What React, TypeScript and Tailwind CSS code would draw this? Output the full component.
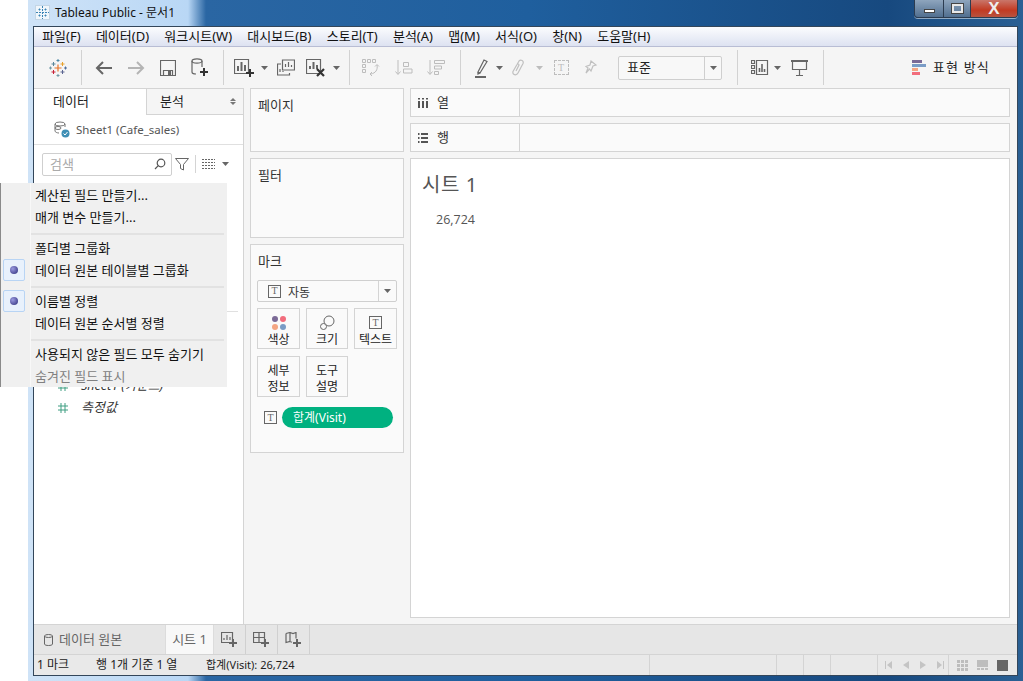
import type { ReactNode } from 'react';

const ic = { fill: 'none', stroke: '#666', strokeWidth: 1.2 };

function Icon({ w = 20, h = 20, children, className }: { w?: number; h?: number; children: ReactNode; className?: string }) {
  return (
    <svg width={w} height={h} viewBox={`0 0 ${w} ${h}`} className={className} {...ic}>
      {children}
    </svg>
  );
}

function Plus({ x, y, color = '#333' }: { x: number; y: number; color?: string }) {
  return <path d={`M${x - 4} ${y}h8M${x} ${y - 4}v8`} stroke={color} strokeWidth={2} fill="none" />;
}

function Caret({ color = '#666' }: { color?: string }) {
  return (
    <svg width="7" height="4" viewBox="0 0 7 4">
      <path d="M0 0h7L3.5 4z" fill={color} />
    </svg>
  );
}

function TableauLogo() {
  const cross = (x: number, y: number, r: number, color: string, sw: number) => (
    <path key={`${x}-${y}`} d={`M${x - r} ${y}h${r * 2}M${x} ${y - r}v${r * 2}`} stroke={color} strokeWidth={sw} fill="none" />
  );
  return (
    <svg width="18" height="18" viewBox="0 0 18 18">
      {cross(9, 9, 3.5, '#e8762b', 1.2)}
      {cross(4.5, 5, 2, '#59879b', 1)}
      {cross(13.5, 5, 2, '#e8a02b', 1)}
      {cross(4.5, 13, 2, '#c72037', 1)}
      {cross(13.5, 13, 2, '#5b6591', 1)}
      {cross(9, 1.5, 1.5, '#4f8aa8', 1)}
      {cross(9, 16.5, 1.5, '#7099a6', 1)}
      {cross(1.5, 9, 1.5, '#7099a6', 1)}
      {cross(16.5, 9, 1.5, '#4f6f9e', 1)}
    </svg>
  );
}

function TitleIcon() {
  return (
    <div className="flex h-[15px] w-[15px] items-center justify-center border border-[#c4d6e6] bg-[#f0f6fb]">
      <svg width="13" height="13" viewBox="0 0 13 13" stroke="#3b84b5" fill="none" strokeWidth="1">
        <path d="M6.5 0v13M0 6.5h13M2.500 3.500h2M3.500 2.500v2M8.500 3.500h2M9.500 2.500v2M2.500 9.500h2M3.500 8.500v2M8.500 9.500h2M9.500 8.500v2" strokeDasharray="2 1" />
      </svg>
    </div>
  );
}

function Slot({ w, children }: { w: string; children?: ReactNode }) {
  return <div className={`flex shrink-0 items-center justify-center ${w}`}>{children}</div>;
}

function Sep() {
  return <div className="h-[35px] w-px shrink-0 bg-[#d2d2d2]" />;
}

function TBox({ size = 14, color = '#666' }: { size?: number; color?: string }) {
  return (
    <span
      className="flex items-center justify-center border font-['Liberation_Serif',serif] text-[10px] leading-none"
      style={{ width: size, height: size, borderColor: color, color }}
    >
      T
    </span>
  );
}

const menus = ['파일(F)', '데이터(D)', '워크시트(W)', '대시보드(B)', '스토리(T)', '분석(A)', '맵(M)', '서식(O)', '창(N)', '도움말(H)'];

function Toolbar() {
  return (
    <div className="flex h-[41px] shrink-0 items-center bg-[#f5f5f5]">
      <Slot w="w-[47px]"><TableauLogo /></Slot>
      <Sep />
      <div className="w-[6px]" />
      <Slot w="w-[32px]">
        <Icon w={18} h={14}><path d="M17 7H2M8 1L2 7l6 6" stroke="#666" strokeWidth={2} /></Icon>
      </Slot>
      <Slot w="w-[32px]">
        <Icon w={18} h={14}><path d="M1 7h15M10 1l6 6-6 6" stroke="#b4b4b4" strokeWidth={2} /></Icon>
      </Slot>
      <Slot w="w-[32px]">
        <Icon w={16} h={16}><path d="M.5.500h15v15H.5zM3.500 15.500v-5h9v5" /><path d="M8 11h3v4H8z" fill="#666" stroke="none" /></Icon>
      </Slot>
      <Slot w="w-[32px]">
        <Icon w={20} h={20}>
          <ellipse cx="7" cy="3" rx="5" ry="2.2" />
          <path d="M2 3v11c0 1 1.500 2 4 2M12 3v6" />
          <Plus x={14} y={14} />
        </Icon>
      </Slot>
      <div className="w-[7px]" />
      <Sep />
      <div className="w-[10px]" />
      <Slot w="w-[22px]">
        <Icon w={22} h={20}>
          <path d="M.5 1.500h14v14H.5z" />
          <path d="M4 8v5M7.500 4v9M11 7v6" strokeWidth={2} />
          <Plus x={16} y={15} />
        </Icon>
      </Slot>
      <div className="flex w-[16px] justify-center"><Caret /></div>
      <Slot w="w-[28px]">
        <Icon w={18} h={18}>
          <path d="M5.500 1h12v10h-12z" />
          <path d="M8.500 8V5M11.500 8V3M14.500 8V6" />
          <path d="M4 5H.5v11h12v-2" />
          <path d="M3 13v-3M6 13v-1" />
        </Icon>
      </Slot>
      <div className="w-[2px]" />
      <Slot w="w-[28px]">
        <Icon w={20} h={20}>
          <path d="M.5 1.500h14v14H.5z" />
          <path d="M4 11V8M7.500 11V4M11 11V7" strokeWidth={2} />
          <path d="M11 11l7 7M18 11l-7 7" stroke="#333" strokeWidth={2.2} />
        </Icon>
      </Slot>
      <div className="flex w-[12px] justify-center"><Caret /></div>
      <div className="w-[7px]" />
      <Sep />
      <div className="w-[10px]" />
      <Slot w="w-[22px]">
        <Icon w={20} h={20}>
          <g stroke="#bdbdbd" strokeWidth={1}>
            <path d="M1.500 1.500h3v3h-3zM6.500 1.500h3v3h-3zM11.500 1.500h3v3h-3zM1.500 6.500h3v3h-3zM1.500 11.500h3v3h-3z" />
            <path d="M16 7c1 5-1.500 8-6 9M14 8.500l2-2 2 2M11 14l-2 2 2 2" />
          </g>
        </Icon>
      </Slot>
      <div className="w-[11px]" />
      <Slot w="w-[22px]">
        <Icon w={20} h={18}>
          <g stroke="#bdbdbd" strokeWidth={1}>
            <path d="M4 1v14M1.500 12.500L4 15.500l2.500-3" />
            <path d="M9.500 2.500h5v4h-5zM9.500 9h8.500v4H9.500z" transform="translate(0 1)" />
          </g>
        </Icon>
      </Slot>
      <div className="w-[10px]" />
      <Slot w="w-[22px]">
        <Icon w={20} h={18}>
          <g stroke="#bdbdbd" strokeWidth={1}>
            <path d="M4 1v14M1.500 12.500L4 15.500l2.500-3" />
            <path d="M8.500 1.500h10v3h-10zM8.500 7h7v3h-7zM8.500 12.500h4v3h-4z" />
          </g>
        </Icon>
      </Slot>
      <div className="w-[13px]" />
      <Sep />
      <div className="w-[10px]" />
      <Slot w="w-[20px]">
        <Icon w={14} h={20}>
          <path d="M4 14l6-12 3 1.500L6 15z" />
          <path d="M4 14v2l2-1" />
          <path d="M1 19h11" strokeWidth={2} />
        </Icon>
      </Slot>
      <div className="flex w-[16px] justify-center"><Caret /></div>
      <Slot w="w-[22px]">
        <Icon w={13} h={20}>
          <path d="M3 10l4-7c2-2 5 0 4 2.500L6 15c-1.500 3-6 2-5-1.500L5 6.500c.5-1 2-.5 2 .5l-3 6" stroke="#c0c0c0" />
        </Icon>
      </Slot>
      <div className="flex w-[20px] justify-center"><Caret color="#bdbdbd" /></div>
      <Slot w="w-[24px]">
        <span className="flex h-[15px] w-[15px] items-center justify-center border border-dashed border-[#bdbdbd] font-['Liberation_Serif',serif] text-[10px] text-[#bdbdbd]">T</span>
      </Slot>
      <Slot w="w-[36px]">
        <Icon w={14} h={18}>
          <path d="M7 2l5 4-3 1-2 5-1.500-2L2 14l2-5-2-1.500 4-1.500z" stroke="#c0c0c0" />
        </Icon>
      </Slot>
      <div className="w-[9px]" />
      <div className="flex h-[24px] w-[104px] shrink-0 items-center rounded-[2px] border border-[#cfcfcf] bg-[#f8f8f8]">
        <span className="flex-1 pl-[8px] text-[13px] text-[#222]">표준</span>
        <div className="flex h-full w-[17px] items-center justify-center border-l border-[#cfcfcf]"><Caret /></div>
      </div>
      <div className="w-[15px]" />
      <Sep />
      <div className="w-[12px]" />
      <Slot w="w-[19px]">
        <Icon w={18} h={15}>
          <path d="M.5.500h3v3h-3zM.5 5.500h3v3h-3zM.5 10.500h3v3h-3zM5.500.500h11v14h-11z" />
          <path d="M8.500 12V8M11 12V4M13.500 12V9" strokeWidth={1.6} />
        </Icon>
      </Slot>
      <div className="flex w-[16px] justify-center"><Caret /></div>
      <div className="w-[6px]" />
      <Slot w="w-[17px]">
        <Icon w={17} h={16} className="shrink-0">
          <path d="M0 1h17" strokeWidth={2} />
          <path d="M1.500 1.500v8h14v-8M8.500 9.500V15M5 15.500h7" />
        </Icon>
      </Slot>
      <div className="w-[15px]" />
      <Sep />
      <div className="flex-1" />
      <div className="flex items-center gap-[7px] pr-[27px]">
        <div className="flex w-[14px] flex-col">
          <div className="h-[3px] w-[10px] bg-[#7b6a96]" />
          <div className="mt-px h-[3px] w-[14px] bg-[#7a9cc6]" />
          <div className="mt-px h-[3px] w-[6px] bg-[#f4a582]" />
          <div className="mt-px h-[3px] w-[8px] bg-[#f26d7d]" />
        </div>
        <span className="text-[13px] tracking-[1.2px] text-[#222]">표현 방식</span>
      </div>
    </div>
  );
}

function Hash() {
  return (
    <svg width="10" height="10" viewBox="0 0 10 10" stroke="#3f9e82" fill="none" className="shrink-0">
      <path d="M3 0v10M7 0v10M0 3h10M0 7h10" />
    </svg>
  );
}

function DataPane() {
  return (
    <div className="flex w-[210px] shrink-0 flex-col border-r border-t border-[#d4d4d4] bg-white">
      <div className="flex h-[26px] shrink-0">
        <div className="flex w-[112px] items-center pl-[19px] text-[13px] text-[#222]">데이터</div>
        <div className="flex flex-1 items-center justify-between border-b border-l border-[#d4d4d4] bg-[#f5f5f5] pl-[13px] pr-[7px] text-[13px] text-[#222]">
          <span>분석</span>
          <span className="flex flex-col gap-px">
            <span className="h-0 w-0 border-x-[3px] border-b-[3px] border-x-transparent border-b-[#777]" />
            <span className="h-0 w-0 border-x-[3px] border-t-[3px] border-x-transparent border-t-[#777]" />
          </span>
        </div>
      </div>
      <div className="flex h-[30px] shrink-0 items-center gap-[6px] border-b border-[#e0e0e0] pl-[19px] text-[11.5px] text-[#555]">
        <svg width="17" height="17" viewBox="0 0 17 17" fill="none" stroke="#777">
          <ellipse cx="7" cy="3" rx="5" ry="2" />
          <path d="M2 3v7c0 1 2 2 4 2M12 3v3" />
          <ellipse cx="5" cy="7" rx="3" ry="1.500" />
          <circle cx="12.500" cy="12.500" r="4" fill="#3f8fb5" stroke="none" />
          <path d="M10.500 12.500l1.500 1.500 2.500-3" stroke="#fff" />
        </svg>
        Sheet1 (Cafe_sales)
      </div>
      <div className="flex h-[38px] shrink-0 items-center pl-[8px]">
        <div className="flex h-[23px] w-[130px] items-center justify-between rounded-[2px] border border-[#cfcfcf] pl-[7px] pr-[5px] text-[13px] text-[#aaa]">
          <span className="pt-[2px]">검색</span>
          <svg width="12" height="12" viewBox="0 0 12 12" fill="none" stroke="#555" strokeWidth="1.200">
            <circle cx="7" cy="5" r="3.800" />
            <path d="M4.300 7.700L1 11" />
          </svg>
        </div>
        <svg width="14" height="13" viewBox="0 0 14 13" fill="none" stroke="#666" className="ml-[3px]">
          <path d="M.5.500h13L8.500 6.500V12l-3-1.500v-4z" />
        </svg>
        <div className="ml-[6px] h-[18px] w-px bg-[#d4d4d4]" />
        <svg width="13" height="10" viewBox="0 0 13 10" stroke="#666" className="ml-[6px]" strokeDasharray="2 1">
          <path d="M0 .5h13M0 3.500h13M0 6.500h13M0 9.500h13" />
        </svg>
        <div className="ml-[7px]"><Caret /></div>
      </div>
      <div className="flex-1">
        <div className="mr-[5px] mt-[128px] h-px bg-[#e0e0e0]" />
        <div className="mt-[63px] flex h-[22px] items-center gap-[13px] pl-[24px] text-[12.5px] italic text-[#333]">
          <Hash />Sheet1 (카운트)
        </div>
        <div className="flex h-[22px] items-center gap-[13px] pl-[24px] text-[13px] italic text-[#333]">
          <Hash />측정값
        </div>
      </div>
    </div>
  );
}

function MarkBtn({ icon, label }: { icon?: ReactNode; label: ReactNode }) {
  return (
    <div className="flex flex-col items-center justify-center border border-[#d4d4d4] bg-[#fafafa] pt-[4px] text-center text-[12px] leading-[16px] text-[#222]">
      {icon && <div className="flex h-[20px] items-center">{icon}</div>}
      {label}
    </div>
  );
}

function CardsColumn() {
  return (
    <div className="flex w-[154px] shrink-0 flex-col gap-[6px]">
      <div className="h-[64px] border border-[#d4d4d4] bg-[#fafafa] pl-[7px] pt-[7px] text-[13px] text-[#333]">페이지</div>
      <div className="h-[80px] border border-[#d4d4d4] bg-[#fafafa] pl-[7px] pt-[7px] text-[13px] text-[#333]">필터</div>
      <div className="h-[209px] border border-[#d4d4d4] bg-[#fafafa] px-[6px] pt-[7px] text-[13px] text-[#333]">
        <div className="h-[20px] pl-px">마크</div>
        <div className="mt-[8px] flex h-[22px] items-center rounded-[2px] border border-[#cfcfcf]">
          <div className="flex flex-1 items-center gap-[7px] pl-[10px] text-[12px]">
            <TBox size={13} />
            <span className="pt-[3px]">자동</span>
          </div>
          <div className="flex h-full w-[18px] items-center justify-center border-l border-[#d4d4d4]"><Caret /></div>
        </div>
        <div className="mt-[6px] grid grid-cols-[43px_42px_43px] grid-rows-[41px_41px] gap-x-[6px] gap-y-[7px]">
          <MarkBtn
            label="색상"
            icon={
              <div className="grid grid-cols-2 gap-[2px]">
                <div className="h-[6px] w-[6px] rounded-full bg-[#7b6a96]" />
                <div className="h-[6px] w-[6px] rounded-full bg-[#f26d7d]" />
                <div className="h-[6px] w-[6px] rounded-full bg-[#f4a582]" />
                <div className="h-[6px] w-[6px] rounded-full bg-[#7a9cc6]" />
              </div>
            }
          />
          <MarkBtn
            label="크기"
            icon={
              <svg width="15" height="15" viewBox="0 0 15 15" fill="none" stroke="#666">
                <circle cx="9" cy="6" r="5" />
                <circle cx="3.500" cy="11.500" r="3" fill="#fafafa" />
              </svg>
            }
          />
          <MarkBtn label="텍스트" icon={<TBox size={13} />} />
          <MarkBtn label={<>세부<br />정보</>} />
          <MarkBtn label={<>도구<br />설명</>} />
        </div>
        <div className="mt-[10px] flex items-center gap-[5px] pl-[7px]">
          <TBox size={13} />
          <div className="flex h-[21px] w-[111px] items-center rounded-full bg-[#00b180] pl-[11px] text-[12px] text-white">합계(Visit)</div>
        </div>
      </div>
    </div>
  );
}

function Shelf({ icon, label }: { icon: ReactNode; label: string }) {
  return (
    <div className="flex h-[29px] shrink-0 border border-[#d4d4d4] bg-[#fafafa] text-[13px] text-[#333]">
      <div className="flex w-[109px] items-center gap-[9px] border-r border-[#d4d4d4] pl-[7px]">
        {icon}
        {label}
      </div>
    </div>
  );
}

function ViewArea() {
  return (
    <div className="flex min-w-0 flex-1 flex-col gap-[6px] pr-[7px]">
      <Shelf
        label="열"
        icon={
          <svg width="10" height="10" viewBox="0 0 10 10" stroke="#555" strokeWidth="2">
            <path d="M1 3v7M5 3v7M9 3v7" />
            <path d="M1 0v1.500M5 0v1.500M9 0v1.500" />
          </svg>
        }
      />
      <Shelf
        label="행"
        icon={
          <svg width="10" height="10" viewBox="0 0 10 10" stroke="#555" strokeWidth="2">
            <path d="M0 1h1.500M3 1h7M0 5h1.500M3 5h7M0 9h1.500M3 9h7" />
          </svg>
        }
      />
      <div className="h-[460px] border border-[#d4d4d4] bg-white pl-[11px] pt-[12px] text-[#555]">
        <div className="text-[20px] leading-[28px] tracking-[0.6px]">시트 1</div>
        <div className="mt-[12px] pl-[14px] font-['Open_Sans','Liberation_Sans',sans-serif] text-[12.5px]">26,724</div>
      </div>
    </div>
  );
}

function TabBar() {
  const adder = 'flex h-full w-[32px] items-center justify-center border-r border-[#d0d0d0]';
  return (
    <div className="flex h-[30px] shrink-0 border-t border-[#d4d4d4] bg-[#e6e6e6] text-[13px]">
      <div className="flex w-[131px] items-center gap-[6px] pl-[10px] text-[#666]">
        <svg width="9" height="12" viewBox="0 0 9 12" fill="none" stroke="#666">
          <ellipse cx="4.500" cy="2" rx="4" ry="1.500" />
          <path d="M.5 2v8c0 1 2 1.500 4 1.500s4-.5 4-1.500V2" />
        </svg>
        데이터 원본
      </div>
      <div className="flex w-[49px] items-center justify-center border-x border-[#dcdcdc] bg-[#f8f8f8] text-[#666]">시트 1</div>
      <div className={adder}>
        <Icon w={17} h={15}>
          <path d="M.5.500h11v10H.5zM3 8V6M6 8V3M9 8V5" />
          <Plus x={12} y={11} color="#666" />
        </Icon>
      </div>
      <div className={adder}>
        <Icon w={17} h={15}>
          <path d="M.5.500h11v10H.5zM6 .5v10M.5 5.500h11" />
          <Plus x={12} y={11} color="#666" />
        </Icon>
      </div>
      <div className={adder}>
        <Icon w={17} h={15}>
          <path d="M1 1.500l4-1 3 1 3-1v6M1 1.500v9l4-1 2 .8M5 .5v9" />
          <Plus x={12} y={11} color="#666" />
        </Icon>
      </div>
    </div>
  );
}

function StatusBar() {
  const cell = 'h-full border-l border-[#d4d4d4]';
  return (
    <div className="flex h-[21px] shrink-0 items-center border-t border-[#d4d4d4] bg-[#e9e9e9] text-[12px] text-[#222]">
      <span className="w-[62px] pl-[3px]">1 마크</span>
      <span className="w-[110px]">행 1개 기준 1 열</span>
      <span className="w-[443px] text-[11px]">합계(Visit): 26,724</span>
      <div className={`${cell} w-[127px]`} />
      <div className={`${cell} w-[27px]`} />
      <div className={`${cell} w-[27px]`} />
      <div className={`${cell} w-[47px]`} />
      <div className={`${cell} flex w-[71px] items-center gap-[8px] pl-[7px]`}>
        <svg width="7" height="8" viewBox="0 0 7 8" fill="#c4c4c4"><path d="M0 0h1v8H0zM7 0v8L2 4z" /></svg>
        <svg width="6" height="8" viewBox="0 0 6 8" fill="#c4c4c4" className="ml-[3px]"><path d="M6 0v8L0 4z" /></svg>
        <svg width="6" height="8" viewBox="0 0 6 8" fill="#c4c4c4" className="ml-[3px]"><path d="M0 0v8l6-4z" /></svg>
        <svg width="7" height="8" viewBox="0 0 7 8" fill="#c4c4c4" className="ml-[3px]"><path d="M0 0v8l5-4zM6 0h1v8H6z" /></svg>
      </div>
      <div className={`${cell} flex flex-1 items-center gap-[9px] pl-[8px]`}>
        <div className="grid grid-cols-3 gap-px">
          {[0, 1, 2, 3, 4, 5, 6, 7, 8].map(i => (
            <div key={i} className="h-[3px] w-[3px] bg-[#bdbdbd]" />
          ))}
        </div>
        <div className="flex flex-col gap-px">
          <div className="h-[7px] w-[11px] bg-[#bdbdbd]" />
          <div className="flex gap-px">
            <div className="h-[2px] w-[3px] bg-[#bdbdbd]" />
            <div className="h-[2px] w-[3px] bg-[#bdbdbd]" />
            <div className="h-[2px] w-[3px] bg-[#bdbdbd]" />
          </div>
        </div>
        <div className="h-[11px] w-[11px] bg-[#666]" />
      </div>
    </div>
  );
}

function MenuItem({ label, checked, dim }: { label: string; checked?: boolean; dim?: boolean }) {
  return (
    <div className={`flex h-[22px] items-center text-[13px] ${dim ? 'text-[#808080]' : 'text-[#111]'}`}>
      <div className="flex w-[34px] shrink-0 justify-start pl-[2px]">
        {checked && (
          <div className="flex h-[22px] w-[22px] items-center justify-center rounded-[2px] border border-[#b8d4f4] bg-[#e8f1fc]">
            <div className="h-[8px] w-[8px] rounded-full bg-[radial-gradient(circle_at_35%_35%,#9a9ae0,#2b2b78)]" />
          </div>
        )}
      </div>
      <span className="pt-[2px]">{label}</span>
    </div>
  );
}

function MenuSep() {
  return <div className="mb-[2px] ml-[30px] mr-[3px] mt-[5px] h-[2px] bg-[#e2e2e2]" />;
}

function ContextMenu() {
  return (
    <div className="absolute left-0 top-[183px] h-[204px] w-[227px] overflow-hidden border-l border-[#8a8a8a] bg-[#f0f0f0] pt-px">
      <div className="absolute bottom-0 left-[29px] top-0 w-px bg-[#f8f8f8]" />
      <MenuItem label="계산된 필드 만들기..." />
      <MenuItem label="매개 변수 만들기..." />
      <MenuSep />
      <MenuItem label="폴더별 그룹화" />
      <MenuItem label="데이터 원본 테이블별 그룹화" checked />
      <MenuSep />
      <MenuItem label="이름별 정렬" checked />
      <MenuItem label="데이터 원본 순서별 정렬" />
      <MenuSep />
      <MenuItem label="사용되지 않은 필드 모두 숨기기" />
      <MenuItem label="숨겨진 필드 표시" dim />
    </div>
  );
}

function WindowButtons() {
  return (
    <div className="flex h-[18px] w-[104px] overflow-hidden rounded-b-[4px] border border-t-0 border-[#2c3c50] shadow-[0_1px_0_rgba(255,255,255,0.5)]">
      <div className="flex w-[29px] items-end justify-center border-r border-[#2c3c50] bg-[linear-gradient(#8ea5bd,#516f90)] pb-[4px]">
        <div className="h-[4px] w-[11px] border border-[#444] bg-white" />
      </div>
      <div className="flex w-[27px] items-center justify-center border-r border-[#2c3c50] bg-[linear-gradient(#8ea5bd,#516f90)]">
        <div className="h-[9px] w-[11px] border-2 border-[#e8e8e8] outline outline-[#444]" />
      </div>
      <div className="flex flex-1 items-center justify-center bg-[linear-gradient(#c9766a,#c23a22_60%,#b8533f)]">
        <span className="font-['Liberation_Sans',sans-serif] text-[17px] font-bold leading-none text-[#eee]">X</span>
      </div>
    </div>
  );
}

export default function App() {
  return (
    <div className="relative h-[681px] w-[1023px] overflow-hidden bg-white font-['Noto_Sans','Noto_Sans_CJK_KR',sans-serif]">
      <div className="ml-[28px] flex h-[681px] w-[995px] flex-col bg-[linear-gradient(to_right,#cfe3f7_0px,#b9d7f5_160px,#2a66a3_178px,#1f5f9e_500px,#17497f_860px,#2a6094_995px)] pb-[5px] pl-[5px] pr-[5px]">
        <div className="flex h-[26px] shrink-0 items-start justify-between">
          <div className="flex items-center gap-[5px] pl-[2px] pt-[5px] text-[12px] leading-[15px] text-[#111]">
            <TitleIcon />
            Tableau Public - 문서1
          </div>
          <WindowButtons />
        </div>
        <div className="flex min-h-0 flex-1 flex-col border border-[#33465a] bg-[#f5f5f5]">
          <div className="flex h-[20px] shrink-0 items-center border-b border-[#b8bdd4] bg-[linear-gradient(#fbfcfe,#dde2f1)] pl-[0.5px] text-[13px] text-[#111]">
            {menus.map(m => (
              <span key={m} className="px-[7.65px]">{m}</span>
            ))}
          </div>
          <Toolbar />
          <div className="flex min-h-0 flex-1 gap-[6px]">
            <DataPane />
            <CardsColumn />
            <ViewArea />
          </div>
          <TabBar />
          <StatusBar />
        </div>
      </div>
      <ContextMenu />
    </div>
  );
}
